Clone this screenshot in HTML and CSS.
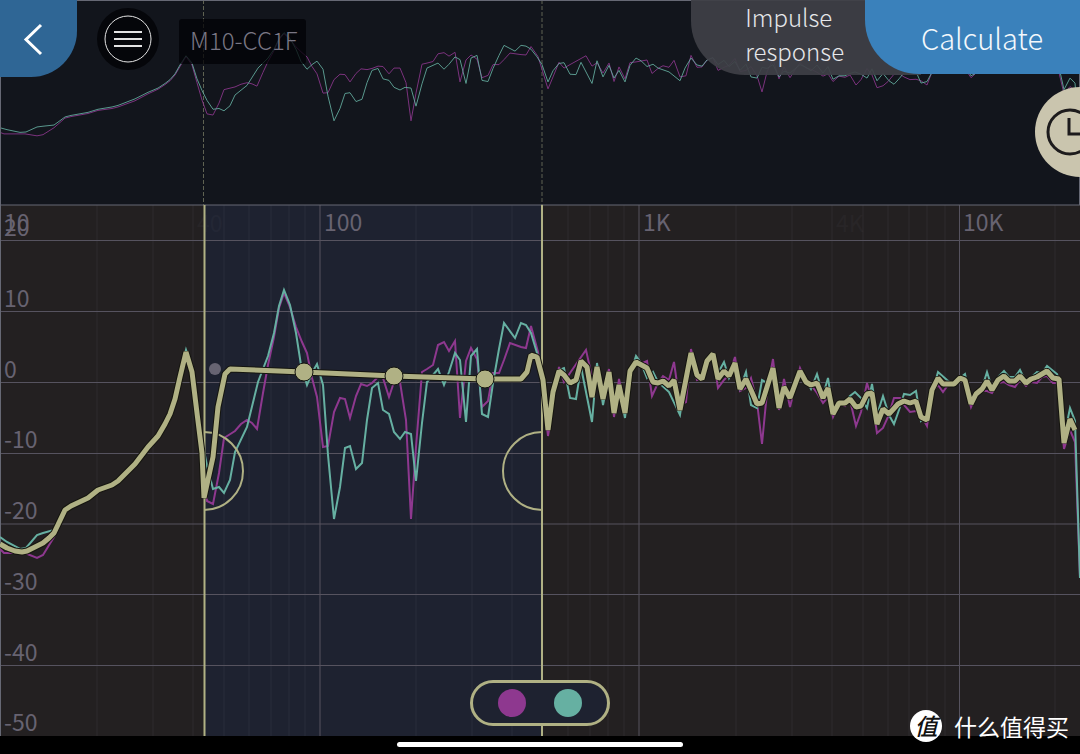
FILE: index.html
```
<!DOCTYPE html>
<html lang="en">
<head>
<meta charset="utf-8">
<title>Frequency response</title>
<link rel="stylesheet" href="styles.css">
</head>
<body>
<main class="app">
  <svg class="chart" viewBox="0 0 1080 736" role="img" aria-label="Frequency response chart">
    <defs>
      <polyline id="left-response" points="0,549 4,553 25,553 37,558 43,555 54,537 65,512 71,508 88,500 98,492 112,487 118,483 135,467 148,449 158,437 165,425 170,415 175,400 180,378 186,352 192,374 197,420 202,465 207,501 213,504 219,473 224,438 235,431 241,424 247,420 252,423 257,429 263,393 268,365 274,337 279,308 284,293 290,307 296,327 302,342 307,353 312,378 317,397 323,447 328,446 334,412 340,398 345,399 350,418 356,396 361,384 367,386 372,383 378,377 383,378 389,397 394,382 400,382 406,420 411,519 416,447 422,372 427,369 433,365 438,345 444,342 449,351 455,341 460,418 466,361 471,348 477,359 482,407 488,401 493,373 499,373 504,360 510,343 521,347 526,348 531,326 538,352 548,436 553,405 559,367 564,382 570,373 586,350 592,377 597,368 603,395 609,369 614,417 619,379 625,410 630,368 636,366 647,361 652,396 658,383 663,376 669,380 674,362 680,405 686,402 691,349 697,380 702,379 707,361 713,355 718,388 724,380 729,375 735,357 740,391 746,388 751,378 757,402 762,444 767,392 773,359 779,410 784,379 790,407 795,387 800,368 806,382 811,385 817,393 823,403 828,397 833,417 839,403 845,406 850,400 856,426 861,412 867,383 872,400 877,433 883,428 888,417 894,398 900,398 904,405 910,412 916,411 921,415 927,426 932,392 938,385 943,392 948,385 954,384 960,380 965,383 971,407 976,395 982,391 987,391 992,393 998,383 1004,382 1009,385 1015,387 1020,380 1026,386 1031,382 1037,383 1042,377 1047,376 1053,383 1058,383 1064,449 1070,430 1075,442 1080,578"/>
      <polyline id="right-response" points="0,537 7,542 20,549 26,548 37,535 43,533 54,530 65,509 71,505 88,497 98,489 112,483 118,479 135,462 148,445 158,434 165,422 170,412 175,397 180,374 186,350 192,369 197,410 202,440 207,466 213,489 219,487 224,493 230,480 235,452 247,427 258,382 268,356 274,333 279,306 284,290 290,305 296,333 301,365 307,385 312,373 317,364 323,385 328,455 334,519 340,487 345,448 350,446 356,469 362,463 367,420 372,388 378,383 383,410 389,414 394,432 400,439 405,432 411,434 416,481 422,423 427,382 438,369 444,385 449,372 455,353 460,360 466,422 471,356 477,349 482,414 488,417 493,383 499,349 504,323 515,338 521,323 526,325 531,333 537,353 542,373 548,418 553,389 559,370 564,368 570,398 576,399 581,367 592,422 597,363 603,405 609,375 614,408 619,388 625,418 630,375 636,356 641,363 647,378 653,372 658,382 669,392 680,415 685,382 691,356 697,374 702,377 707,361 713,355 718,373 724,362 729,378 735,365 740,388 746,372 751,405 757,408 762,380 767,383 773,373 779,405 784,390 790,395 800,373 806,380 811,389 817,374 823,395 828,378 833,411 839,402 845,402 850,396 855,392 861,398 867,408 872,384 877,415 883,396 889,415 894,424 899,410 904,394 910,395 916,391 921,421 927,417 932,393 938,372 947,380 954,385 960,378 965,374 971,402 976,395 982,388 987,372 992,388 998,377 1004,371 1009,377 1015,377 1020,370 1026,382 1037,372 1042,373 1047,366 1057,374 1059,380 1064,438 1070,408 1075,421 1080,578"/>
      <polyline id="target-curve" points="0,544 7,548 15,551 22,552 27,551 35,547 43,543 49,538 54,533 65,510 71,506 88,498 98,490 112,485 118,481 135,464 148,447 158,436 165,424 170,414 175,399 180,377 186,352 192,372 197,413 202,453 204,498 213,457 218,407 225,374 230,369 303,372 394,376 485,379 521,379 527,372 531,355 537,357 543,380 548,430 553,392 559,371 564,375 570,383 576,380 581,361 587,367 592,397 597,367 603,399 609,372 614,413 619,385 625,413 630,371 636,362 647,368 653,382 658,383 663,381 669,386 674,380 680,410 691,353 697,375 702,379 707,361 713,354 718,379 724,371 729,376 735,363 740,389 746,379 751,390 757,404 762,403 767,387 773,368 779,408 784,387 790,398 800,371 806,382 811,385 817,383 823,398 828,388 833,414 839,403 845,403 850,399 856,407 861,406 867,394 872,393 877,424 883,409 889,414 898,404 904,401 910,403 916,401 921,417 927,420 932,390 938,378 943,384 954,384 960,378 965,380 971,404 976,394 982,389 987,381 992,390 998,380 1004,376 1009,381 1015,381 1020,376 1026,383 1031,379 1037,377 1047,371 1053,378 1059,379 1064,443 1070,419 1075,430"/>
    </defs>

    <rect class="overview-bg" width="1080" height="205"/>
    <rect class="plot-bg" y="205" width="1080" height="531"/>
    <rect class="range-bg" x="204" y="205" width="338" height="531"/>

    <g class="overview">
      <path class="range-mark" d="M203.500 0V205M542 0V205"/>
      <g transform="translate(0 -79) scale(1 .385)">
        <use class="line-left" href="#left-response"/>
        <use class="line-right" href="#right-response"/>
      </g>
    </g>

    <path class="grid-minor" d="M97 205V736M153 205V736M193 205V736M224 205V736M249 205V736M271 205V736M289 205V736M305 205V736M416 205V736M472 205V736M512 205V736M568 205V736M590 205V736M608 205V736M624 205V736M736 205V736M792 205V736M832 205V736M863 205V736M888 205V736M909 205V736M927 205V736M945 205V736M1055 205V736"/>
    <path class="grid-major" d="M0 240.500H1080M0 311.500H1080M0 382.500H1080M0 453.500H1080M0 524H1080M0 594.500H1080M0 665.500H1080M320 205V736M639 205V736M959.500 205V736"/>
    <path class="frame" d="M0 .5H1080M0 205H1080M.5 0V736M1079.500 0V205"/>

    <g class="axis faint">
      <text x="197" y="232">40</text>
      <text x="836" y="232">4K</text>
    </g>
    <g class="axis">
      <text x="4" y="231">10</text>
      <text x="324" y="231">100</text>
      <text x="643" y="231">1K</text>
      <text x="963" y="231">10K</text>
      <text x="4" y="236">20</text>
      <text x="4" y="307">10</text>
      <text x="4" y="378">0</text>
      <text x="4" y="448">-10</text>
      <text x="4" y="519">-20</text>
      <text x="4" y="590">-30</text>
      <text x="4" y="661">-40</text>
      <text x="4" y="731">-50</text>
    </g>

    <g class="plot">
      <use class="line-left" href="#left-response"/>
      <use class="line-right" href="#right-response"/>
    </g>
    <path class="range-edge" d="M204.500 205V736M542 205V736"/>
    <path class="range-handle" d="M204 432A39 39 0 0 1 204 510M542 432A39 39 0 0 0 542 510"/>
    <circle class="anchor" cx="215" cy="369" r="6"/>
    <use class="target-shadow" href="#target-curve"/>
    <use class="target" href="#target-curve"/>
    <g class="nodes">
      <circle cx="304" cy="372" r="9"/>
      <circle cx="394" cy="376" r="9"/>
      <circle cx="485" cy="379" r="9"/>
    </g>
  </svg>

  <header class="toolbar">
    <button class="back" type="button" aria-label="Back">
      <svg width="24" height="34" viewBox="0 0 24 34"><path d="M20 3L5 17.500L20 32"/></svg>
    </button>
    <button class="menu" type="button" aria-label="Menu">
      <svg width="62" height="62" viewBox="0 0 62 62"><circle cx="31" cy="31" r="23"/><path d="M17 24H45M17 31H45M17 38H45"/></svg>
    </button>
    <h1 class="title">M10-CC1F</h1>
    <div class="actions">
      <button class="impulse" type="button">Impulse<br>response</button>
      <button class="calculate" type="button">Calculate</button>
    </div>
  </header>

  <button class="history" type="button" aria-label="History">
    <svg width="45" height="90" viewBox="0 0 45 90"><circle cx="35" cy="45" r="22"/><path d="M34 31V47H45"/></svg>
  </button>

  <div class="channels">
    <button class="channel channel-left" type="button" aria-label="Left channel"></button>
    <button class="channel channel-right" type="button" aria-label="Right channel"></button>
  </div>

  <footer class="home"><span class="home-bar"></span></footer>

  <div class="brand"><span class="brand-mark">值</span><span>什么值得买</span></div>
</main>
</body>
</html>
```
FILE: styles.css
```
* { box-sizing: border-box; }

body {
  margin: 0;
  background: #000;
  font-family: "Noto Sans CJK SC", "Open Sans", sans-serif;
  font-weight: 300;
}

button {
  margin: 0;
  padding: 0;
  border: 0;
  background: none;
  color: inherit;
  font: inherit;
  cursor: pointer;
}

.app {
  position: relative;
  overflow: hidden;
}

.chart {
  display: block;
  width: 100%;
}

.overview-bg { fill: #12151c; }
.plot-bg { fill: #232021; }
.range-bg { fill: #1e2230; }

.line-left, .line-right, .target, .target-shadow { fill: none; }
.line-left { stroke: #8e388f; }
.line-right { stroke: #66b0a2; }
.plot { stroke-width: 2; }
.overview { stroke-width: 1; }
.overview use { opacity: .85; }
#left-response, #right-response { vector-effect: non-scaling-stroke; }

.range-mark { stroke: #5f6252; stroke-dasharray: 4 2; }
.grid-minor { stroke: #77758a; stroke-opacity: .14; }
.grid-major { stroke: #56535f; fill: none; }
.frame { stroke: #666874; fill: none; }

.axis {
  fill: #676371;
  font-size: 23px;
  font-weight: 400;
}
.faint { opacity: .08; }

.range-edge { stroke: #b0b184; stroke-width: 2; }
.range-handle { fill: none; stroke: #b0b184; stroke-width: 2; }
.anchor { fill: #676472; }
.target-shadow { stroke: #15150f; stroke-width: 7; stroke-linejoin: bevel; }
.target { stroke: #b0b184; stroke-width: 5; stroke-linejoin: bevel; }
.nodes { fill: #b0b184; stroke: #15150f; stroke-width: 1; }

.toolbar {
  position: absolute;
  top: 0;
  left: 0;
  right: 0;
  display: flex;
  align-items: flex-start;
}

.back {
  display: flex;
  align-items: center;
  justify-content: center;
  width: 77px;
  height: 77px;
  padding-right: 12px;
  border-radius: 0 0 46px 0;
  background: #2f6695;
}
.back svg { fill: none; stroke: #fff; stroke-width: 3; }

.menu {
  width: 62px;
  height: 62px;
  margin: 8px 0 0 20px;
  border-radius: 50%;
  background: #05060a;
}
.menu svg { display: block; fill: none; stroke: #e4e4e4; stroke-width: 2; }
.menu circle { stroke-width: 1; }

.title {
  margin: 19px 0 0 20px;
  padding: 0 8px 4px 11px;
  border-radius: 3px;
  background: rgba(2, 2, 5, .75);
  color: #797684;
  font-size: 24px;
  font-weight: 300;
  line-height: 41px;
}

.actions {
  display: flex;
  margin-left: auto;
  color: #e6e7ea;
}

.impulse {
  height: 75px;
  margin-right: -56px;
  padding: 0 77px 9px 54px;
  border-radius: 0 0 0 54px;
  background: rgba(62, 63, 70, .93);
  font-size: 24px;
  line-height: 34px;
  text-align: left;
}

.calculate {
  height: 74px;
  padding: 0 37px 0 56px;
  border-radius: 0 0 0 54px;
  background: #3a81bb;
  color: #f3f8fc;
  font-size: 29px;
  line-height: 74px;
}

.history {
  position: absolute;
  top: 87px;
  right: 0;
  width: 45px;
  height: 90px;
  border-radius: 45px 0 0 45px;
  background: #cac5ae;
}
.history svg { display: block; fill: none; stroke: #1d1b1c; stroke-width: 3; }

.channels {
  position: absolute;
  bottom: 28px;
  left: 50%;
  display: flex;
  align-items: center;
  justify-content: center;
  gap: 28px;
  width: 140px;
  height: 46px;
  margin-left: -70px;
  border: 3px solid #b0b184;
  border-radius: 23px;
  background: #1e2230;
}
.channel { width: 28px; height: 28px; border-radius: 50%; }
.channel-left { background: #8e388f; }
.channel-right { background: #66b0a2; }

.home {
  display: flex;
  justify-content: center;
  height: 18px;
  padding-top: 6px;
  background: #000;
}
.home-bar { width: 286px; height: 5px; border-radius: 3px; background: #fff; }

.brand {
  position: absolute;
  right: 11px;
  bottom: 12px;
  display: flex;
  align-items: center;
  gap: 12px;
  color: #fff;
  font-size: 23px;
  font-weight: 400;
  line-height: 32px;
}
.brand-mark {
  width: 32px;
  height: 32px;
  border-radius: 50%;
  background: #fff;
  color: #111;
  font-size: 23px;
  font-weight: 500;
  font-style: italic;
  text-align: center;
  line-height: 30px;
}
```
